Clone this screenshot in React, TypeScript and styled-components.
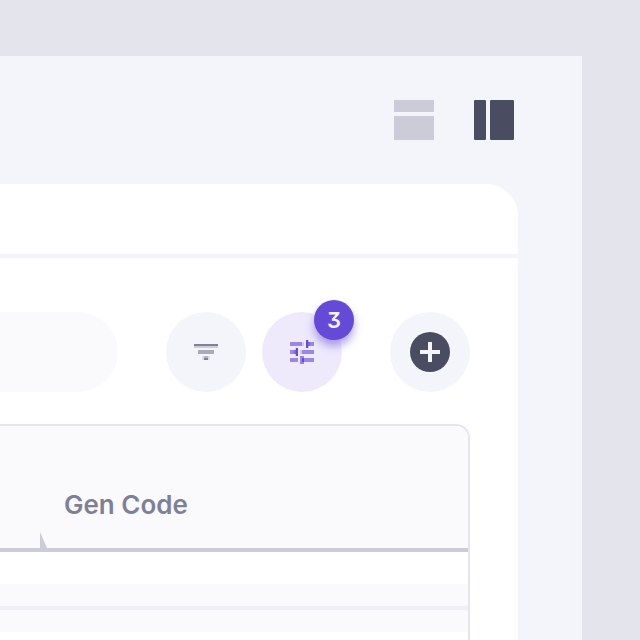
import React from "react";
import styled, { createGlobalStyle } from "styled-components";

const GlobalStyle = createGlobalStyle`
  *, *::before, *::after { box-sizing: border-box; }
  body {
    margin: 0;
    background: #e4e4ed;
    color: #7f8097;
    font-family: Inter, "Liberation Sans", sans-serif;
  }
`;

const Page = styled.div`
  display: flex;
  min-height: 100vh;
  padding: 56px 58px 0 0;
`;

const Panel = styled.main`
  display: flex;
  flex: 1;
  flex-direction: column;
  min-width: 0;
  padding-right: 64px;
  background: #f3f5fb;
`;

const ViewBar = styled.div`
  display: flex;
  justify-content: flex-end;
  gap: 40px;
  padding: 44px 4px;
`;

const ViewButton = styled.button<{ $active?: boolean }>`
  display: flex;
  padding: 0;
  border: 0;
  background: none;
  color: ${(p) => (p.$active ? "#4a4c61" : "#cccbd8")};
  cursor: pointer;
`;

const Card = styled.section`
  display: flex;
  flex: 1;
  flex-direction: column;
  border-top-right-radius: 32px;
  background: #fff;
`;

const CardHeader = styled.header`
  height: 74px;
  border-bottom: 4px solid #f3f3f9;
`;

const CardBody = styled.div`
  display: flex;
  flex: 1;
  flex-direction: column;
  gap: 32px;
  padding: 54px 48px 0 0;
`;

const Toolbar = styled.div`
  display: flex;
  gap: 48px;
`;

const SearchInput = styled.input`
  flex: 1;
  min-width: 0;
  height: 80px;
  padding: 0 40px 0 0;
  border: 0;
  border-radius: 0 40px 40px 0;
  background: #fafafc;
  color: inherit;
  font: inherit;
  font-size: 24px;
`;

const ButtonGroup = styled.div`
  display: flex;
  gap: 16px;
`;

const RoundButton = styled.button<{ $selected?: boolean }>`
  position: relative;
  display: flex;
  flex-shrink: 0;
  align-items: center;
  justify-content: center;
  width: 80px;
  height: 80px;
  padding: 0;
  border: 0;
  border-radius: 50%;
  background: ${(p) => (p.$selected ? "#eeeafc" : "#f3f5fb")};
  color: ${(p) => (p.$selected ? "#6549d7" : "#4a4c61")};
  cursor: pointer;
`;

const Badge = styled.span`
  position: absolute;
  top: -12px;
  right: -12px;
  width: 40px;
  height: 40px;
  border-radius: 50%;
  background: #6549d7;
  box-shadow: 0 6px 8px rgba(101, 73, 215, 0.5);
  color: #f3f0ff;
  font-family: Inter, "Liberation Sans", sans-serif;
  font-feature-settings: "cv09";
  font-size: 22px;
  font-weight: 600;
  line-height: 40px;
  text-align: center;
`;

const TableFrame = styled.div`
  flex: 1;
  overflow: hidden;
  border: 2px solid #e4e5ef;
  border-width: 2px 2px 0 0;
  border-top-right-radius: 14px;
`;

const Table = styled.table`
  width: 100%;
  border-collapse: separate;
  border-spacing: 0;
  table-layout: fixed;
`;

const SideColumn = styled.col`
  width: 40px;
`;

const HeadCell = styled.th`
  position: relative;
  height: 126px;
  padding: 36px 24px 0;
  border-bottom: 4px solid #cccbd8;
  background: #fafafc;
  font-size: 26px;
  font-weight: 600;
  line-height: 32px;
  text-align: left;
`;

const ResizeMark = styled.svg`
  position: absolute;
  bottom: 0;
  left: 0;
`;

const Cell = styled.td<{ $height: number; $shaded?: boolean; $ruled?: boolean }>`
  height: ${(p) => p.$height}px;
  padding: 0;
  border-bottom: ${(p) => (p.$ruled ? "4px solid #f0f0f7" : "0")};
  background: ${(p) => (p.$shaded ? "#fafafc" : "#fff")};
`;

const rows = [
  { height: 32, shaded: false, ruled: false },
  { height: 26, shaded: true, ruled: true },
  { height: 22, shaded: true, ruled: false },
];

function RowsIcon() {
  return (
    <svg width="40" height="40" fill="currentColor" aria-hidden="true">
      <path d="M0 0H40V12H0zM0 16H40V40H0z" />
    </svg>
  );
}

function SidebarIcon() {
  return (
    <svg width="40" height="40" fill="currentColor" aria-hidden="true">
      <rect width="12" height="40" rx="1" />
      <rect x="16" width="24" height="40" rx="1" />
    </svg>
  );
}

function FilterIcon() {
  return (
    <svg width="24" height="24" shapeRendering="crispEdges" aria-hidden="true">
      <path fill="#827f96" d="M0 4H24V6H0z" />
      <path fill="#cdccd8" d="M0 6H24V8H0z" />
      <path fill="#a9aabb" d="M4 10H20V14H4z" />
      <path fill="#dcdce6" d="M8 16H16V20H8z" />
      <path fill="#b5b5c4" d="M10 16H14V18H10z" />
      <path fill="#827f96" d="M10 18H14V20H10z" />
    </svg>
  );
}

function TuneIcon() {
  return (
    <svg width="24" height="24" shapeRendering="crispEdges" aria-hidden="true">
      <path
        fill="#9a86e6"
        d="M0 2H12V6H0zM18 2H24V6H18zM0 10H6V14H0zM12 10H24V14H12zM0 18H8V22H0zM10 16H14V24H10zM14 18H24V22H14z"
      />
      <path fill="#d0c6f5" d="M12 2H14V6H12zM10 10H12V14H10z" />
      <path fill="#cbc0f3" d="M18 0H19V8H18zM5 8H6V16H5z" />
      <path fill="#6549d7" d="M16 0H18V8H16zM6 8H8V16H6zM12 18H14V22H12z" />
      <path fill="#7d65dd" d="M18 2H20V6H18zM4 10H6V14H4z" />
    </svg>
  );
}

function AddIcon() {
  return (
    <svg width="40" height="40" aria-hidden="true">
      <circle cx="20" cy="20" r="20" fill="currentColor" />
      <path d="M20 10V30M10 20H30" stroke="#f3f5fb" strokeWidth="4" />
    </svg>
  );
}

export default function App() {
  return (
    <>
      <GlobalStyle />
      <Page>
        <Panel>
          <ViewBar>
            <ViewButton type="button" aria-label="Stacked view">
              <RowsIcon />
            </ViewButton>
            <ViewButton type="button" aria-label="Side view" aria-pressed="true" $active>
              <SidebarIcon />
            </ViewButton>
          </ViewBar>
          <Card>
            <CardHeader />
            <CardBody>
              <Toolbar>
                <SearchInput type="text" aria-label="Search" />
                <ButtonGroup>
                  <RoundButton type="button" aria-label="Sort">
                    <FilterIcon />
                  </RoundButton>
                  <RoundButton type="button" aria-label="Filters, 3 active" $selected>
                    <TuneIcon />
                    <Badge>3</Badge>
                  </RoundButton>
                </ButtonGroup>
                <RoundButton type="button" aria-label="Add">
                  <AddIcon />
                </RoundButton>
              </Toolbar>
              <TableFrame>
                <Table>
                  <colgroup>
                    <SideColumn />
                    <col />
                  </colgroup>
                  <thead>
                    <tr>
                      <HeadCell as="td" />
                      <HeadCell scope="col">
                        Gen Code
                        <ResizeMark width="7" height="16" aria-hidden="true">
                          <path d="M0 0L7 16H0z" fill="#cccbd8" />
                        </ResizeMark>
                      </HeadCell>
                    </tr>
                  </thead>
                  <tbody>
                    {rows.map((row, index) => (
                      <tr key={index}>
                        <Cell $height={row.height} $shaded={row.shaded} $ruled={row.ruled} />
                        <Cell $height={row.height} $shaded={row.shaded} $ruled={row.ruled} />
                      </tr>
                    ))}
                  </tbody>
                </Table>
              </TableFrame>
            </CardBody>
          </Card>
        </Panel>
      </Page>
    </>
  );
}
